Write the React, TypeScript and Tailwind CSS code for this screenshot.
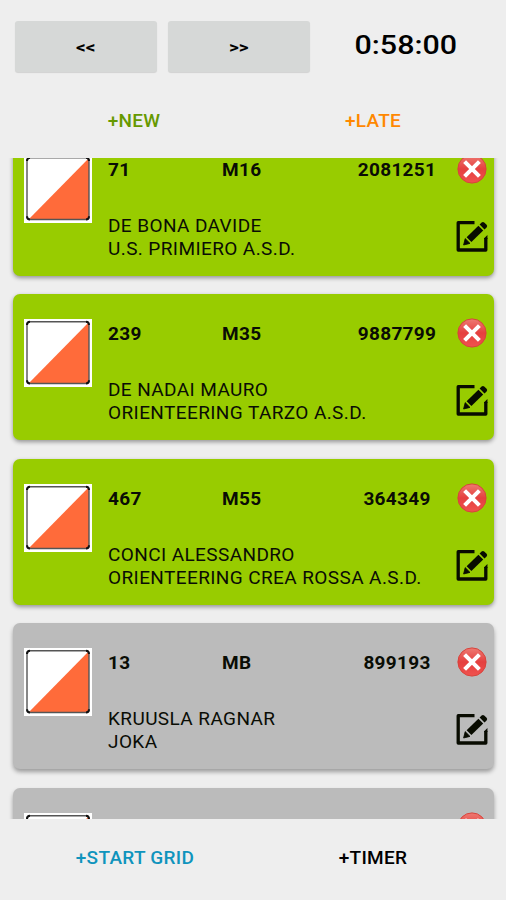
type Entry = {
  bib: string;
  category: string;
  card: string;
  name: string;
  club: string;
  started: boolean;
};

const entries: Entry[] = [
  { bib: "71", category: "M16", card: "2081251", name: "DE BONA DAVIDE", club: "U.S. PRIMIERO A.S.D.", started: true },
  { bib: "239", category: "M35", card: "9887799", name: "DE NADAI MAURO", club: "ORIENTEERING TARZO A.S.D.", started: true },
  { bib: "467", category: "M55", card: "364349", name: "CONCI ALESSANDRO", club: "ORIENTEERING CREA ROSSA A.S.D.", started: true },
  { bib: "13", category: "MB", card: "899193", name: "KRUUSLA RAGNAR", club: "JOKA", started: false },
  { bib: "", category: "", card: "", name: "", club: "", started: false },
];

function FlagIcon() {
  return (
    <svg viewBox="0 0 68 68" className="block size-[68px]">
      <rect width="68" height="68" fill="#fff" />
      <path d="M65 3V64H5Z" fill="#ff6b3a" />
      <rect x="3" y="2.7" width="62" height="61.8" rx="3.5" fill="none" stroke="#555" strokeWidth="1.4" />
      <path d="M3 6Q3 2.7 6 2.7M62 2.7Q65 2.7 65 6M65 61.2Q65 64.5 62 64.5M6 64.5Q3 64.5 3 61.2" fill="none" stroke="#111" strokeWidth="2" />
    </svg>
  );
}

function DeleteIcon() {
  return (
    <svg viewBox="0 0 30 30" className="block size-[30px]">
      <defs>
        <linearGradient id="red" x1="0" y1="0" x2="0" y2="1">
          <stop offset="0" stopColor="#ee7a72" />
          <stop offset="0.5" stopColor="#e5403f" />
          <stop offset="1" stopColor="#f0524f" />
        </linearGradient>
      </defs>
      <circle cx="15" cy="15" r="14.1" fill="url(#red)" stroke="#d8433b" strokeWidth="1" />
      <path d="M7.6 7.6 22.4 22.4M22.4 7.6 7.6 22.4" stroke="#fff" strokeWidth="4.1" />
    </svg>
  );
}

function EditIcon() {
  return (
    <svg viewBox="0 0 32 32" className="block size-8">
      <path d="M18.5 2.7H2.2V30H29.8V18" fill="none" stroke="#080b00" strokeWidth="3.3" strokeLinejoin="round" />
      <path d="M28.15 18.2 31.45 14.9V19H28.15Z" fill="#080b00" />
      <path d="M22.4 5.8 27.2 10.6 15.4 22 10.6 17.2Z" fill="#080b00" />
      <path d="M9.2 18.6 14 23.4 7.6 25Z" fill="#080b00" stroke="#080b00" strokeWidth="0.8" strokeLinejoin="round" />
      <path d="M23.6 4.6 25.6 2.6Q26.8 1.4 28.2 2.4L30.6 4.8Q31.8 6.2 30.6 7.4L28.5 9.4Z" fill="#080b00" />
    </svg>
  );
}

function EntryCard({ entry }: { entry: Entry }) {
  const tone = entry.started
    ? "bg-[#98cc00] shadow-[0_2px_4px_rgba(0,0,0,0.38)]"
    : "bg-[#bbbbbb] shadow-[0_3px_4px_rgba(0,0,0,0.34)]";
  return (
    <article className={`flex h-[146px] shrink-0 rounded-[7px] pl-[11px] pr-[6px] ${tone}`}>
      <div className="pt-[25px]">
        <FlagIcon />
      </div>
      <div className="ml-4 flex min-w-0 flex-1 flex-col whitespace-nowrap pt-7">
        <div className="flex h-[23px] items-center text-[19px] font-bold leading-[23px] tracking-[0.3px]">
          <span className="w-[114px]">{entry.bib}</span>
          <span className="w-[126px]">{entry.category}</span>
          <span className="w-[98px] text-center">{entry.card}</span>
        </div>
        <div className="mt-[33px] text-[19px] leading-[23px] tracking-[0.4px]">
          <p>{entry.name}</p>
          <p>{entry.club}</p>
        </div>
      </div>
      <div className="flex w-8 shrink-0 flex-col items-center pt-6">
        <DeleteIcon />
        <div className="mt-9">
          <EditIcon />
        </div>
      </div>
    </article>
  );
}

export default function App() {
  return (
    <main className="flex h-[900px] w-[506px] flex-col overflow-hidden bg-[#eeeeee] font-['Roboto','Liberation_Sans',sans-serif] text-[#0a0d05]">
      <header className="flex h-[158px] shrink-0 flex-col">
        <div className="flex pl-[15px] pt-[21px]">
          <button className="h-[51px] w-[142px] rounded-[3px] bg-[#d6d8d7] pt-0.5 text-[17px] font-bold text-black shadow-[0_1px_1px_rgba(0,0,0,0.12)]">
            <span className="inline-block scale-x-[1.12]">&lt;&lt;</span>
          </button>
          <button className="ml-[11px] h-[51px] w-[142px] rounded-[3px] bg-[#d6d8d7] pt-0.5 text-[17px] font-bold text-black shadow-[0_1px_1px_rgba(0,0,0,0.12)]">
            <span className="inline-block scale-x-[1.12]">&gt;&gt;</span>
          </button>
          <div className="flex h-12 flex-1 items-center justify-center pr-[4px] text-[26px] font-medium text-black">
            <span className="scale-x-[1.17]">0:58:00</span>
          </div>
        </div>
        <nav className="mt-[37px] flex text-[19px] font-medium leading-6 tracking-[0.3px]">
          <button className="w-[268px] text-[#669900]">+NEW</button>
          <button className="w-[210px] text-[#ff8800]">+LATE</button>
        </nav>
      </header>
      <section className="flex h-[661px] shrink-0 flex-col overflow-hidden px-3">
        <div className="-mt-[28.5px] flex flex-col gap-[18.5px] pl-px">
          {entries.map((entry, i) => (
            <EntryCard key={i} entry={entry} />
          ))}
        </div>
      </section>
      <footer className="flex pt-[27px] text-[19px] font-medium leading-6 tracking-[0.3px]">
        <button className="w-[270px] text-[#0f94bd]">+START GRID</button>
        <button className="w-[206px] text-black">+TIMER</button>
      </footer>
    </main>
  );
}
